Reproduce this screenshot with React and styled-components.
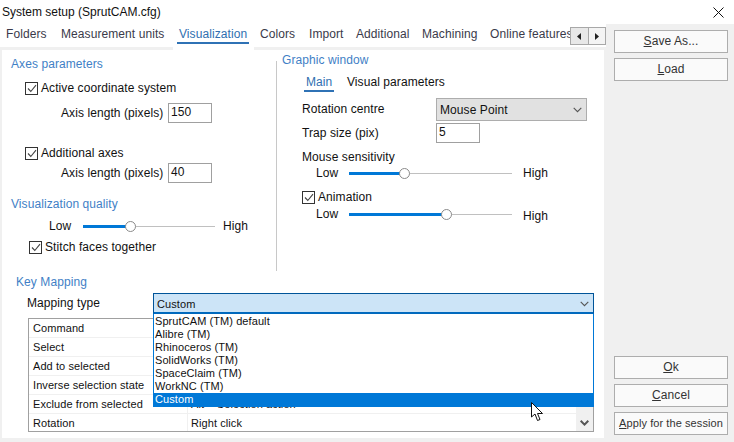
import React from 'react'
import styled, { createGlobalStyle } from 'styled-components'

const GlobalStyle = createGlobalStyle`
  html, body {
    margin: 0;
    padding: 0;
    background: #f0f0f0;
  }

  body {
    width: 734px;
    height: 442px;
    overflow: hidden;
    font-family: "Liberation Sans", Arial, sans-serif;
    font-size: 12px;
    letter-spacing: 0.08px;
    color: #111;
  }
`

const Window = styled.div`
  position: relative;
  width: 734px;
  height: 442px;
  overflow: hidden;
`

const TitleBar = styled.div`
  display: flex;
  align-items: center;
  justify-content: space-between;
  height: 24px;
  padding: 0 10px 0 2px;
  background: #fff;
  letter-spacing: 0;
`

const Body = styled.div`
  display: flex;
`

const Main = styled.div`
  width: 606px;
`

const TabStrip = styled.div`
  display: flex;
  height: 23px;
  background: #fff;
`

const Tabs = styled.div`
  display: flex;
  flex: none;
  width: 568px;
  height: 26px;
  padding-left: 2px;
  overflow: hidden;
  white-space: nowrap;
`

const Tab = styled.div`
  flex: none;
  box-sizing: border-box;
  width: ${({ $width }) => $width}px;
  height: ${({ $active }) => ($active ? '26px' : '23px')};
  padding: 2px 0 0 ${({ $pad }) => $pad || 4}px;
  line-height: 16px;
  color: ${({ $active }) => ($active ? '#2f6fb0' : '#3a3a4a')};
  background: #fff;
`

const TabLabel = styled.span`
  display: inline-block;
  ${({ $active }) =>
    $active &&
    `
    padding: 0 2px;
    margin-left: -2px;
    border-bottom: 2px solid #2f72b5;
  `}
`

const ScrollButtons = styled.div`
  display: flex;
  flex: none;
  width: 36px;
  height: 18px;
  margin-top: 3px;
  border: 1px solid #a8a8a8;
  box-sizing: border-box;
  background: #e8e8e8;
`

const ScrollButton = styled.div`
  flex: 1;
  display: flex;
  align-items: center;
  justify-content: center;

  & + & {
    border-left: 1px solid #a8a8a8;
    background: #f4f4f4;
  }
`

const Panel = styled.div`
  margin: 3px 2px 0;
  width: 602px;
  height: 388px;
  background: #fff;
`

const Columns = styled.div`
  display: flex;
  height: 222px;
`

const LeftColumn = styled.div`
  width: 274px;
`

const Divider = styled.div`
  width: 1px;
  height: 210px;
  margin-top: 11px;
  background: #c8c8c8;
`

const RightColumn = styled.div`
  padding-left: 5px;
`

const Heading = styled.div`
  height: 20px;
  line-height: 20px;
  margin-top: ${({ $top }) => $top || 0}px;
  padding-left: ${({ $left }) => $left || 0}px;
  color: #3f7fc6;
`

const Row = styled.div`
  display: flex;
  align-items: center;
  height: ${({ $height }) => $height || 20}px;
  margin-top: ${({ $top }) => $top || 0}px;
  padding-left: ${({ $left }) => $left || 0}px;
`

const FieldLabel = styled.span`
  width: ${({ $width }) => $width}px;
  flex: none;
  margin-bottom: ${({ $raise }) => $raise || 0}px;
`

const Box = styled.span`
  width: 11px;
  height: 11px;
  margin-right: 3px;
  border: 1px solid #333;
  display: flex;
  align-items: center;
  justify-content: center;
  flex: none;
`

const Input = styled.div`
  box-sizing: border-box;
  width: 44px;
  height: 20px;
  padding-left: 2px;
  border: 1px solid #a0a0a0;
  line-height: 17px;
  background: #fff;
`

const SubTabs = styled.div`
  display: flex;
  height: 20px;
  margin-top: 2px;
  padding-left: 24px;
  line-height: 20px;
`

const SubTab = styled.div`
  box-sizing: border-box;
  height: 20px;
  color: ${({ $active }) => ($active ? '#2f6fb0' : '#111')};

  ${({ $active }) =>
    $active &&
    `
    width: 30px;
    padding-left: 2px;
    margin: 0 13px 0 -2px;
    border-bottom: 2px solid #2f72b5;
  `}
`

const Select = styled.div`
  box-sizing: border-box;
  display: flex;
  align-items: center;
  justify-content: space-between;
  width: 151px;
  height: 23px;
  padding: 1px 4px 0 3px;
  background: #e1e1e1;
  border: 1px solid #adadad;
`

const SliderWrap = styled.div`
  display: flex;
  align-items: center;
  height: 16px;
  margin-top: ${({ $top }) => $top || 0}px;
  padding-left: ${({ $left }) => $left}px;
`

const SliderLabel = styled.span`
  flex: none;
  width: ${({ $width }) => $width}px;
`

const SliderHigh = styled.span`
  margin-top: ${({ $drop }) => ($drop ? '4px' : '0')};
`

const Track = styled.div`
  position: relative;
  flex: none;
  width: ${({ $width }) => $width}px;
  height: 1px;
  margin-right: ${({ $gap }) => $gap}px;
  background: #c0c0c0;
`

const TrackFill = styled.div`
  position: absolute;
  left: 0;
  top: -1px;
  height: 3px;
  background: #0078d7;
`

const Thumb = styled.div`
  position: absolute;
  top: -5px;
  box-sizing: border-box;
  width: 11px;
  height: 11px;
  margin-left: -5px;
  border: 1px solid #8a8a8a;
  border-radius: 50%;
  background: #fff;
`

const KeyMapping = styled.div`
  padding-left: 14px;
`

const MappingRow = styled.div`
  display: flex;
  align-items: center;
  height: 21px;
  margin-top: 1px;
  padding-left: 11px;
`

const Combo = styled.div`
  position: relative;
  box-sizing: border-box;
  display: flex;
  align-items: center;
  justify-content: space-between;
  width: 441px;
  height: 21px;
  padding: 1px 4px 0 3px;
  font-size: 11px;
  background: #cce4f7;
  border: 1px solid #005499;
  border-bottom: 2px solid #0069bd;
`

const DropList = styled.div`
  position: absolute;
  z-index: 2;
  left: -1px;
  top: 20px;
  box-sizing: border-box;
  width: 441px;
  height: 93px;
  padding-top: 1px;
  border: solid #0078d7;
  border-width: 0 1px;
  background: #fff;
`

const DropItem = styled.div`
  height: ${({ $selected }) => ($selected ? '14px' : '13px')};
  line-height: 13px;
  color: ${({ $selected }) => ($selected ? '#fff' : '#111')};
  background: ${({ $selected }) => ($selected ? '#0078d7' : 'transparent')};
  margin: ${({ $selected }) => ($selected ? '0 -1px' : '0')};
  padding-left: ${({ $selected }) => ($selected ? '2px' : '1px')};
`

const KeyTable = styled.div`
  position: relative;
  box-sizing: border-box;
  width: 566px;
  height: 114px;
  margin: 4px 0 0 12px;
  border: 1px solid #a0a0a0;
  overflow: hidden;
  font-size: 11px;
`

const KeyRow = styled.div`
  display: grid;
  grid-template-columns: 158px 1fr;
  height: 19px;
  line-height: 18px;
  border-bottom: 1px solid #f0f0f0;
  box-sizing: border-box;

  &:last-child {
    border-bottom: 0;
  }
`

const KeyCell = styled.div`
  padding-left: 4px;
  white-space: nowrap;

  & + & {
    padding-left: 3px;
    border-left: 1px solid #f0f0f0;
  }
`

const RowDrop = styled.div`
  position: absolute;
  right: 0;
  bottom: 0;
  width: 17px;
  height: 24px;
  padding-bottom: 5px;
  box-sizing: border-box;
  display: flex;
  align-items: flex-end;
  justify-content: center;
  background: #f0f0f0;
`

const Sidebar = styled.div`
  width: 114px;
  height: 418px;
  margin-left: 8px;
  display: flex;
  flex-direction: column;
  gap: 5px;
  padding-top: 6px;
  box-sizing: border-box;
`

const Button = styled.div`
  box-sizing: border-box;
  width: 114px;
  height: 23px;
  border: 1px solid #adadad;
  background: #fafafa;
  color: #333;
  text-align: center;
  line-height: 21px;
  font-size: ${({ $small }) => ($small ? '11px' : '12px')};
  margin-top: ${({ $top }) => $top || 0}px;

  u {
    text-underline-offset: 1px;
  }
`

const Cursor = styled.svg`
  position: absolute;
  left: 531px;
  top: 402px;
  z-index: 3;
`

const Check = () => (
  <svg width="10" height="9" viewBox="0 0 10 9">
    <path d="M1 4.5 L3.8 7.5 L9 1.2" fill="none" stroke="#444" strokeWidth="1.1" />
  </svg>
)

const Chevron = ({ bold }) => (
  <svg width="9" height="6" viewBox="0 0 9 6">
    <path d="M0.7 0.8 L4.5 4.6 L8.3 0.8" fill="none" stroke="#555" strokeWidth={bold ? 2 : 1.1} />
  </svg>
)

const CheckRow = ({ top, left, height, children }) => (
  <Row $top={top} $left={left} $height={height}>
    <Box>
      <Check />
    </Box>
    <span>{children}</span>
  </Row>
)

const Slider = ({ top, left, labelWidth, width, value, gap, drop }) => (
  <SliderWrap $top={top} $left={left}>
    <SliderLabel $width={labelWidth}>Low</SliderLabel>
    <Track $width={width} $gap={gap}>
      <TrackFill style={{ width: value }} />
      <Thumb style={{ left: value }} />
    </Track>
    <SliderHigh $drop={drop}>High</SliderHigh>
  </SliderWrap>
)

const tabs = [
  { label: 'Folders', width: 55 },
  { label: 'Measurement units', width: 116 },
  { label: 'Visualization', width: 81, pad: 6, active: true },
  { label: 'Colors', width: 51, pad: 6 },
  { label: 'Import', width: 47 },
  { label: 'Additional', width: 66 },
  { label: 'Machining', width: 68 },
  { label: 'Online features', width: 84 },
]

const mappings = [
  'SprutCAM (TM) default',
  'Alibre (TM)',
  'Rhinoceros (TM)',
  'SolidWorks (TM)',
  'SpaceClaim (TM)',
  'WorkNC (TM)',
]

// the second column is mostly covered by the open list
const keyRows = [
  ['Command', ''],
  ['Select', ''],
  ['Add to selected', ''],
  ['Inverse selection state', ''],
  ['Exclude from selected', 'Alt + Selection action'],
  ['Rotation', 'Right click'],
]

const App = () => (
  <Window>
    <GlobalStyle />
    <TitleBar>
      <span>System setup (SprutCAM.cfg)</span>
      <svg width="11" height="11" viewBox="0 0 11 11">
        <path d="M0.5 0.5 L10.5 10.5 M10.5 0.5 L0.5 10.5" stroke="#111" strokeWidth="1" />
      </svg>
    </TitleBar>
    <Body>
      <Main>
        <TabStrip>
          <Tabs>
            {tabs.map((tab) => (
              <Tab key={tab.label} $active={tab.active} $width={tab.width} $pad={tab.pad}>
                <TabLabel $active={tab.active}>{tab.label}</TabLabel>
              </Tab>
            ))}
          </Tabs>
          <ScrollButtons>
            <ScrollButton>
              <svg width="4" height="7" viewBox="0 0 4 7">
                <path d="M4 0 L0 3.5 L4 7 Z" fill="#222" />
              </svg>
            </ScrollButton>
            <ScrollButton>
              <svg width="4" height="7" viewBox="0 0 4 7">
                <path d="M0 0 L4 3.5 L0 7 Z" fill="#222" />
              </svg>
            </ScrollButton>
          </ScrollButtons>
        </TabStrip>
        <Panel>
          <Columns>
            <LeftColumn>
              <Heading $top={4} $left={9}>Axes parameters</Heading>
              <CheckRow top={4} left={23}>Active coordinate system</CheckRow>
              <Row $top={5} $left={59}>
                <FieldLabel $width={107}>Axis length (pixels)</FieldLabel>
                <Input>150</Input>
              </Row>
              <CheckRow top={20} left={23}>Additional axes</CheckRow>
              <Row $left={59}>
                <FieldLabel $width={107}>Axis length (pixels)</FieldLabel>
                <Input>40</Input>
              </Row>
              <Heading $top={11} $left={9}>Visualization quality</Heading>
              <Slider top={4} left={47} labelWidth={34} width={132} value={47} gap={8} />
              <CheckRow top={3} left={27}>Stitch faces together</CheckRow>
            </LeftColumn>
            <Divider />
            <RightColumn>
              <Heading>Graphic window</Heading>
              <SubTabs>
                <SubTab $active>Main</SubTab>
                <SubTab>Visual parameters</SubTab>
              </SubTabs>
              <Row $top={6} $left={20} $height={23}>
                <FieldLabel $width={134} $raise={2}>Rotation centre</FieldLabel>
                <Select>
                  <span>Mouse Point</span>
                  <Chevron />
                </Select>
              </Row>
              <Row $top={2} $left={20}>
                <FieldLabel $width={134}>Trap size (pix)</FieldLabel>
                <Input>5</Input>
              </Row>
              <Row $top={6} $left={20} $height={16}>Mouse sensitivity</Row>
              <Slider left={34} labelWidth={33} width={163} value={55} gap={11} />
              <CheckRow top={8} left={20} height={16}>Animation</CheckRow>
              <Slider top={1} left={34} labelWidth={33} width={163} value={97} gap={11} drop />
            </RightColumn>
          </Columns>
          <KeyMapping>
            <Heading>Key Mapping</Heading>
            <MappingRow>
              <FieldLabel $width={126} $raise={2}>Mapping type</FieldLabel>
              <Combo>
                <span>Custom</span>
                <Chevron />
                <DropList>
                  {mappings.map((name) => (
                    <DropItem key={name}>{name}</DropItem>
                  ))}
                  <DropItem $selected>Custom</DropItem>
                </DropList>
              </Combo>
            </MappingRow>
            <KeyTable>
              {keyRows.map(([command, action]) => (
                <KeyRow key={command}>
                  <KeyCell>{command}</KeyCell>
                  <KeyCell>{action}</KeyCell>
                </KeyRow>
              ))}
              <RowDrop>
                <Chevron bold />
              </RowDrop>
            </KeyTable>
          </KeyMapping>
        </Panel>
      </Main>
      <Sidebar>
        <Button><u>S</u>ave As...</Button>
        <Button><u>L</u>oad</Button>
        <Button $top={270}><u>O</u>k</Button>
        <Button><u>C</u>ancel</Button>
        <Button $small><u>A</u>pply for the session</Button>
      </Sidebar>
    </Body>
    <Cursor width="13" height="20" viewBox="0 0 13 20">
      <path
        d="M0.5 0.5 L0.5 15 L4 12 L6.5 18.5 L9 17.5 L6.5 11.5 L11.5 11.5 Z"
        fill="#fff"
        stroke="#111"
        strokeWidth="1"
      />
    </Cursor>
  </Window>
)

export default App
